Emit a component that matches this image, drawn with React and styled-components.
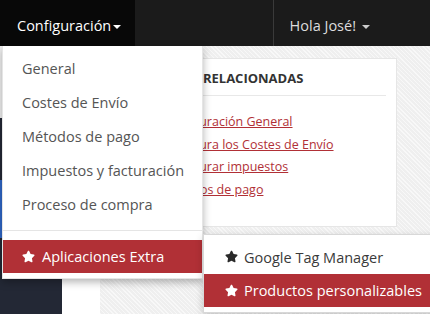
import React from "react";
import styled, { createGlobalStyle } from "styled-components";
import { FaStar } from "react-icons/fa";

const GlobalStyle = createGlobalStyle`
  html, body {
    margin: 0;
    padding: 0;
    width: 430px;
    height: 314px;
    overflow: hidden;
    font-family: "Open Sans", "Liberation Sans", sans-serif;
  }
`;

const menuItems = [
  "General",
  "Costes de Envío",
  "Métodos de pago",
  "Impuestos y facturación",
  "Proceso de compra",
];

const links = [
  "Configuración General",
  "Configura los Costes de Envío",
  "Configurar impuestos",
  "Métodos de pago",
];

const App = () => {
  return (
    <Page>
      <GlobalStyle />
      <Navbar>
        <NavItem $active>
          Configuración<Caret />
          <Dropdown>
            {menuItems.map((item) => (
              <MenuItem key={item}>{item}</MenuItem>
            ))}
            <Divider />
            <MenuItem $highlight>
              <FaStar size={13} />
              Aplicaciones Extra
              <SubMenu>
                <MenuItem $sub>
                  <FaStar size={13} />
                  Google Tag Manager
                </MenuItem>
                <MenuItem $sub $highlight>
                  <FaStar size={13} />
                  Productos personalizables
                </MenuItem>
              </SubMenu>
            </MenuItem>
          </Dropdown>
        </NavItem>
        <NavSpacer />
        <NavItem $separated>
          Hola José! <Caret $light />
        </NavItem>
      </Navbar>

      <Body>
        <Sidebar>
          <SideTop />
          <SideItem />
          <SideItem $active />
          <SideItem />
        </Sidebar>
        <Strip />
        <Main>
          <Panel>
            <PanelTitle>PÁGINAS RELACIONADAS</PanelTitle>
            <LinkList>
              {links.map((l) => (
                <li key={l}>
                  <LinkText href="#">{l}</LinkText>
                </li>
              ))}
            </LinkList>
          </Panel>
        </Main>
      </Body>
    </Page>
  );
};

const Page = styled.div`
  width: 430px;
  height: 314px;
  display: flex;
  flex-direction: column;
  position: relative;
`;

const Navbar = styled.div`
  display: flex;
  align-items: stretch;
  height: 46px;
  background-color: #1b1b1b;
`;

const NavItem = styled.div`
  position: relative;
  display: flex;
  align-items: center;
  padding: 5px ${(p) => (p.$active ? "17px" : "60px")} 0 ${(p) => (p.$active ? "17px" : "16px")};
  width: ${(p) => (p.$active ? "135px" : "auto")};
  box-sizing: border-box;
  font-size: 14.5px;
  color: ${(p) => (p.$active ? "#ffffff" : "#dddddd")};
  background-color: ${(p) => (p.$active ? "#080808" : "transparent")};
  border-left: ${(p) => (p.$separated ? "1px solid #3a3a3a" : "none")};
  white-space: nowrap;
`;

const NavSpacer = styled.div`
  flex: 1;
`;

const Caret = styled.span`
  display: inline-block;
  width: 0;
  height: 0;
  margin-left: ${(p) => (p.$light ? "6px" : "2px")};
  margin-top: 2px;
  border-left: 4px solid transparent;
  border-right: 4px solid transparent;
  border-top: 4px solid ${(p) => (p.$light ? "#cccccc" : "#ffffff")};
`;

const Dropdown = styled.div`
  position: absolute;
  top: 46px;
  left: 2px;
  width: 201px;
  padding: 5px 0 5px;
  background: #ffffff;
  box-shadow: 0 3px 8px rgba(0, 0, 0, 0.3);
  border: 1px solid rgba(0, 0, 0, 0.1);
  border-top: none;
  box-sizing: border-box;
  z-index: 10;
`;

const MenuItem = styled.div`
  position: relative;
  display: flex;
  align-items: center;
  gap: ${(p) => (p.$sub ? "6px" : "7px")};
  height: ${(p) => (p.$highlight ? "33px" : "34px")};
  padding-left: ${(p) => (p.$sub ? "21px" : "19px")};
  font-size: 14.5px;
  color: ${(p) => (p.$highlight ? "#ffffff" : p.$sub ? "#3a3a3a" : "#555555")};
  background-color: ${(p) => (p.$highlight ? "#b13036" : "transparent")};
  white-space: nowrap;

  svg {
    color: ${(p) => (p.$highlight ? "#ffffff" : "#2a2a2a")};
    margin-top: -1px;
  }
`;

const Divider = styled.div`
  height: 1px;
  margin: 9px 0;
  background: #e5e5e5;
`;

const SubMenu = styled.div`
  position: absolute;
  top: -6px;
  left: 200px;
  width: 240px;
  padding: 5px 0;
  background: #ffffff;
  border: 1px solid #d8d8d8;
  box-shadow: 0 3px 8px rgba(0, 0, 0, 0.2);
  box-sizing: border-box;
`;

const Body = styled.div`
  flex: 1;
  display: flex;
`;

const Sidebar = styled.div`
  width: 62px;
  display: flex;
  flex-direction: column;
  background-color: #232835;
`;

const SideTop = styled.div`
  height: 72px;
  background-color: #f2f2f2;
`;

const SideItem = styled.div`
  height: ${(p) => (p.$active ? "58px" : "62px")};
  background-color: ${(p) => (p.$active ? "#2f68c9" : "#232835")};
`;

const Strip = styled.div`
  width: 38px;
  background-color: #ffffff;
`;

const Main = styled.div`
  flex: 1;
  padding: 12px 33px 0 20px;
  background-color: #efefef;
  background-image: repeating-linear-gradient(
    45deg,
    rgba(255, 255, 255, 0.55) 0px,
    rgba(255, 255, 255, 0.55) 1px,
    transparent 1px,
    transparent 3px
  );
`;

const Panel = styled.div`
  height: 169px;
  padding: 10px 10px 0 21px;
  background: #ffffff;
  border: 1px solid #e6e6e6;
  box-sizing: border-box;
`;

const PanelTitle = styled.div`
  font-size: 13px;
  font-weight: 700;
  color: #333333;
  line-height: 19px;
  padding-bottom: 7px;
  border-bottom: 1px solid #e8e8e8;
  white-space: nowrap;
`;

const LinkList = styled.ul`
  list-style: none;
  margin: 15px 0 0;
  padding-left: 20px;
  font-size: 12.5px;
  line-height: 22.5px;
  white-space: nowrap;
`;

const LinkText = styled.a`
  color: #b13036;
  text-decoration: underline;
`;

export default App;
